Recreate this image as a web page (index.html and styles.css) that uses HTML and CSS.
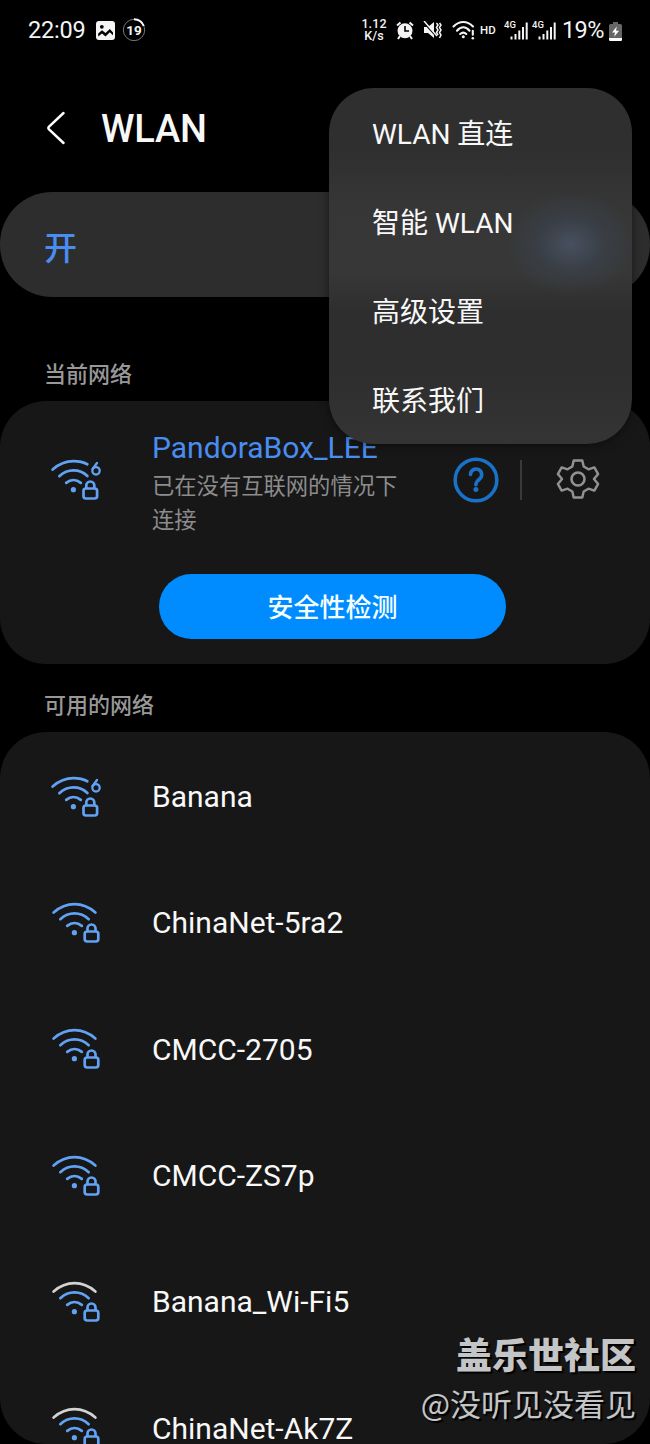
FILE: index.html
```html
<!DOCTYPE html>
<html lang="zh-CN">
<head>
<meta charset="utf-8">
<title>WLAN</title>
<link rel="stylesheet" href="styles.css">
</head>
<body>
<svg class="defs" width="0" height="0">
  <symbol id="lock" viewBox="0 0 52 44">
    <rect x="34.7" y="30.5" width="13.6" height="10" rx="2.4"/>
    <path d="M37.5 30V27.5a4 4 0 0 1 8 0V30"/>
  </symbol>
  <symbol id="wifi" viewBox="0 0 52 44">
    <path class="outer" d="M3.6 11.5Q13.2 3.2 24.5 3.2T45.4 11.5"/>
    <path d="M10.3 18.2Q16.5 12.4 24.5 12.4T38.7 18.2M17.2 24.9Q20.6 22 24.5 22T31.8 24.9"/>
    <circle class="dot" cx="24.4" cy="31.7" r="2.6"/>
    <use href="#lock"/>
  </symbol>
  <symbol id="wifi6" viewBox="0 0 52 44">
    <path d="M2.6 11.5Q12.2 3.2 23.5 3.2Q31.5 3.2 37.3 6.3M9.3 18.2Q15.5 12.4 23.5 12.4T37.4 18M16.2 24.9Q19.6 22 23.5 22T30.8 24.9"/>
    <circle class="dot" cx="23.4" cy="31.7" r="2.6"/>
    <path class="six" d="M47 5L42.6 11"/>
    <circle class="six" cx="46" cy="12.8" r="3.7"/>
    <use href="#lock" x="-1.2"/>
  </symbol>
</svg>
<div class="screen">
  <header class="status">
    <span class="time">22:09</span>
    <svg class="pic" viewBox="0 0 19 19"><rect width="19" height="19" rx="3" fill="#f4f4f4"/><circle cx="5.8" cy="5.8" r="1.9" fill="#000"/><path d="M2.2 12.5L6 9.3l3.5 2.8 4.3-4L17 11.5v2.8l-3.2-3-4.3 4.2L6 12.500l-3.800 3z" fill="#000"/></svg>
    <span class="ring"><svg viewBox="0 0 24 24"><circle cx="12" cy="12" r="10.700" stroke="#777" stroke-width="1"/><path d="M12 1.300A10.700 10.700 0 0 1 21.800 8" stroke="#fff" stroke-width="2"/></svg><b>19</b></span>
    <span class="speed">1.12<br>K/s</span>
    <svg class="alarm" viewBox="0 0 18 19"><circle cx="9" cy="9.700" r="7.500" fill="#f4f4f4"/><path d="M1 4.500L4.500 1.500M17 4.500L13.500 1.500M4 15l-2 3M14 15l2 3" stroke="#f4f4f4" stroke-width="2"/><path d="M9 5v5h4" fill="none" stroke="#000" stroke-width="1.600"/></svg>
    <svg class="mute" viewBox="0 0 19 18"><path d="M1 6h4l6-5v16l-6-5H1z" fill="#f4f4f4"/><path d="M0 .8L13 15" stroke="#000" stroke-width="1.500"/><path d="M1 0L14 15" stroke="#f4f4f4" stroke-width="1.500"/><path d="M13.500 2l1.500 2-1.500 2.500 1.500 2.500-1.500 2.500 1.500 2.500M16.500 2L18 4l-1.500 2.500L18 9l-1.500 2.500L18 14l-1.500 3" fill="none" stroke="#f4f4f4" stroke-width="1.500"/></svg>
    <svg class="net" viewBox="0 0 23 20"><g fill="none" stroke="#f4f4f4" stroke-width="2.100" stroke-linecap="round"><path d="M1.500 6.500Q6 2 11.300 2T21 6.500M5 10.700Q8 7.300 11.300 7.300T17.500 10.700M8.200 14Q11.300 11.300 14.300 14"/><path d="M20.800 10.800v4"/></g><circle cx="11.300" cy="16.700" r="1.500" fill="#f4f4f4"/><circle cx="20.800" cy="18.300" r="1.300" fill="#f4f4f4"/></svg>
    <span class="hd">HD</span>
    <span class="cell"><i>4G</i><svg viewBox="0 0 18 18"><path d="M1.500 17.500v-3M5.500 17.500v-5.500M9.300 17.500v-9M13 17.500V5M16.700 17.500V.5"/></svg></span>
    <span class="cell second"><i>4G</i><svg viewBox="0 0 18 18"><path d="M1.500 17.500v-3M5.500 17.500v-5.500M9.300 17.500v-9M13 17.500V5M16.700 17.500V.5"/></svg></span>
    <span class="pct">19%</span>
    <svg class="batt" viewBox="0 0 13 19"><path d="M4 0h5v2h2.500Q13 2 13 3.500v14q0 1.500-1.500 1.500h-10Q0 19 0 17.500v-14Q0 2 1.500 2H4z" fill="#666"/><path d="M0 16h13v1.500q0 1.500-1.500 1.500h-10Q0 19 0 17.500z" fill="#fff"/><path d="M7.800 4.500L3 10.500h3l-.8 4.300 4.900-6H7z" fill="#fff"/></svg>
  </header>

  <div class="appbar">
    <svg class="back" viewBox="0 0 20 34"><path d="M17.500 2L2.800 15.800Q1.800 17 2.800 18.200L17.500 32"/></svg>
    <h1>WLAN</h1>
  </div>
  <div class="toggle"><span>开</span></div>

  <h2 class="current-title">当前网络</h2>
  <section class="card current">
    <div class="connected">
      <svg class="wifi"><use href="#wifi6"/></svg>
      <div class="info"><div class="ssid">PandoraBox_LEE</div><div class="state">已在没有互联网的情况下<br>连接</div></div>
      <svg class="help" viewBox="0 0 46 46"><circle cx="23" cy="23" r="20.800"/><path d="M17.500 17.500a5.600 5.600 0 1 1 9.400 4.200q-4 3-4 6"/><circle class="q" cx="22.900" cy="32.500" r="2.500"/></svg>
      <span class="rule"></span>
      <svg class="gear" viewBox="0 0 42 42"><path d="M16.500 1.500h9l1.500 6.300 5 3 6.200-2 4 7-4.400 5.200 4.400 5.200-4 7-6.200-2-5 3-1.500 6.300h-9L15 34.200l-5-3-6.200 2-4-7L4.200 21-.2 15.800l4-7 6.200 2 5-3z" transform="translate(1.050 1.050) scale(.95)"/><circle cx="21" cy="21" r="6.500"/></svg>
    </div>
    <button>安全性检测</button>
  </section>

  <h2 class="available-title">可用的网络</h2>
  <section class="card list">
    <div class="row"><svg class="wifi"><use href="#wifi6"/></svg><span>Banana</span></div>
    <div class="row"><svg class="wifi"><use href="#wifi"/></svg><span>ChinaNet-5ra2</span></div>
    <div class="row"><svg class="wifi"><use href="#wifi"/></svg><span>CMCC-2705</span></div>
    <div class="row"><svg class="wifi"><use href="#wifi"/></svg><span>CMCC-ZS7p</span></div>
    <div class="row"><svg class="wifi weak"><use href="#wifi"/></svg><span>Banana_Wi-Fi5</span></div>
    <div class="row"><svg class="wifi weak"><use href="#wifi"/></svg><span>ChinaNet-Ak7Z</span></div>
  </section>

  <nav class="menu"><span>WLAN 直连</span><span>智能 WLAN</span><span>高级设置</span><span>联系我们</span></nav>
  <div class="watermark"><strong>盖乐世社区</strong><span>@没听见没看见</span></div>
</div>
</body>
</html>
```
FILE: styles.css
```css
* { box-sizing: border-box; }
body { margin: 0; background: #000; }
.defs { position: absolute; }
.screen {
  position: relative;
  width: 650px;
  height: 1444px;
  overflow: hidden;
  display: flex;
  flex-direction: column;
  background: #000;
  color: #f8f8f8;
  font-family: Roboto, "Noto Sans CJK SC", sans-serif;
}
svg { flex: none; display: block; }
.status { height: 60px; padding-left: 28px; display: flex; align-items: center; color: #f4f4f4; flex: none; }
.time { width: 68px; font-size: 23.5px; letter-spacing: -.2px; white-space: nowrap; }
.pic { width: 19px; height: 19px; margin-top: 1px; }
.ring { position: relative; width: 24px; height: 24px; margin-left: 7px; display: grid; place-items: center; }
.ring svg { position: absolute; inset: 0; fill: none; }
.ring b { font-size: 13.500px; line-height: 24px; }
.speed { width: 26px; margin-left: 215px; font-size: 12.500px; line-height: 12px; text-align: center; letter-spacing: .1px; font-weight: 500; white-space: nowrap; }
.alarm { width: 18px; height: 19px; margin-left: 9px; }
.mute { width: 19px; height: 18px; margin-left: 9px; }
.net { width: 23px; height: 20px; margin-left: 10px; }
.hd { width: 17px; margin-left: 5px; font-size: 11.500px; font-weight: 500; }
.cell { position: relative; width: 24px; height: 20px; margin-left: 7px; display: flex; justify-content: flex-end; align-items: flex-end; }
.cell.second { margin-left: 4px; }
.cell i { position: absolute; left: 0; top: 0; font-size: 9.500px; line-height: 9px; font-style: normal; font-weight: 500; }
.cell svg { width: 18px; height: 18px; fill: none; stroke: #f4f4f4; stroke-width: 2; }
.pct { width: 44px; margin-left: 6px; font-size: 23.500px; letter-spacing: -.6px; }
.batt { width: 13px; height: 19px; margin-left: 3px; margin-top: 2px; }

.appbar { height: 132px; padding: 1px 0 0 46px; display: flex; align-items: center; flex: none; margin-top: 0; padding-bottom: 14px; }
.back { width: 20px; height: 34px; margin-top: 17px; fill: none; stroke: #fff; stroke-width: 2.500; stroke-linecap: round; stroke-linejoin: round; }
h1 { margin: 19px 0 0 35px; font-size: 38px; font-weight: 500; line-height: 44px; letter-spacing: -.2px; }
.toggle { height: 105px; border-radius: 52px; background: #2d2d2d; padding-left: 44px; display: flex; align-items: center; flex: none; color: #4a8df0; font-size: 33px; font-weight: 500; }
.toggle span { margin-top: 3px; }
h2 { margin: 0; padding-left: 44px; font-size: 22px; line-height: 32px; color: #989898; font-weight: 500; flex: none; }
.current-title { height: 104px; padding-top: 62px; }
.available-title { height: 68px; padding-top: 26px; }
.card { background: #171717; border-radius: 46px; flex: none; }
.current { height: 263px; padding-top: 29px; display: flex; flex-direction: column; }
.connected { height: 144px; display: flex; padding-left: 50px; }
.wifi { width: 52px; height: 44px; fill: none; stroke: #62a2f5; stroke-width: 2.700; stroke-linecap: round; color: #62a2f5; }
.connected .wifi { margin-top: 28px; }
.dot { fill: currentColor; stroke: none; }
.six { stroke-width: 2.300; }
.info { margin-left: 50px; width: 302px; }
.ssid { font-size: 30px; line-height: 36px; color: #4a8df0; letter-spacing: 0; }
.state { font-size: 22.300px; line-height: 34px; color: #8c8c8c; margin-top: 3px; white-space: nowrap; }
.help { width: 46px; height: 46px; margin-top: 27px; margin-left: -1px; fill: none; stroke: #1971c8; stroke-width: 3.600; stroke-linecap: round; }
.help .q { fill: #1971c8; stroke: none; }
.rule { width: 2px; height: 40px; margin: 30px 0 0 21px; background: #3a3a3a; }
.gear { width: 42px; height: 42px; margin: 28px 0 0 35px; fill: none; stroke: #929292; stroke-width: 2.600; stroke-linejoin: round; overflow: visible; }
button { width: 347px; height: 65px; margin-left: 159px; border: 0; border-radius: 33px; background: #008cff; color: #f6ffff; font: 500 26px/65px Roboto, "Noto Sans CJK SC", sans-serif; padding: 3px 0 0; line-height: 62px; }
.list { height: 712px; overflow: hidden; padding-top: 2px; }
.row { height: 126.300px; display: flex; align-items: center; padding: 0 0 0 50px; font-size: 30px; line-height: 36px; }
.row .wifi { margin-top: -1px; }
.row span { margin-left: 50px; }
.weak { --outer: #d2d2d2; }
.outer { stroke: var(--outer, #62a2f5); }

.menu {
  position: absolute; left: 329px; top: 88px; width: 303px; height: 356px;
  border-radius: 45px; padding: 2px 0 0 43px; display: flex; flex-direction: column;
  background:
    radial-gradient(ellipse 65px 52px at 242px 156px, rgba(79,94,115,.65), rgba(63,78,98,.35) 50%, transparent),
    linear-gradient(#2f2f2f 0 18%, #363636 33%, #373737 52%, #2e2e2e 63%, #2e2e2e 80%, #343434);
  box-shadow: 0 1px 10px rgba(0,0,0,.5);
  font-size: 28px;
}
.menu span { height: 89px; line-height: 89px; white-space: nowrap; }
.watermark { position: absolute; right: 14px; top: 1334px; display: flex; flex-direction: column; align-items: flex-end; color: #c4c5c7; text-shadow: 2px 2px 1px #000; white-space: nowrap; }
.watermark strong { font-size: 36px; line-height: 46px; font-weight: 900; }
.watermark span { font-size: 31px; line-height: 46px; font-family: "Noto Sans CJK SC", sans-serif; }
```
